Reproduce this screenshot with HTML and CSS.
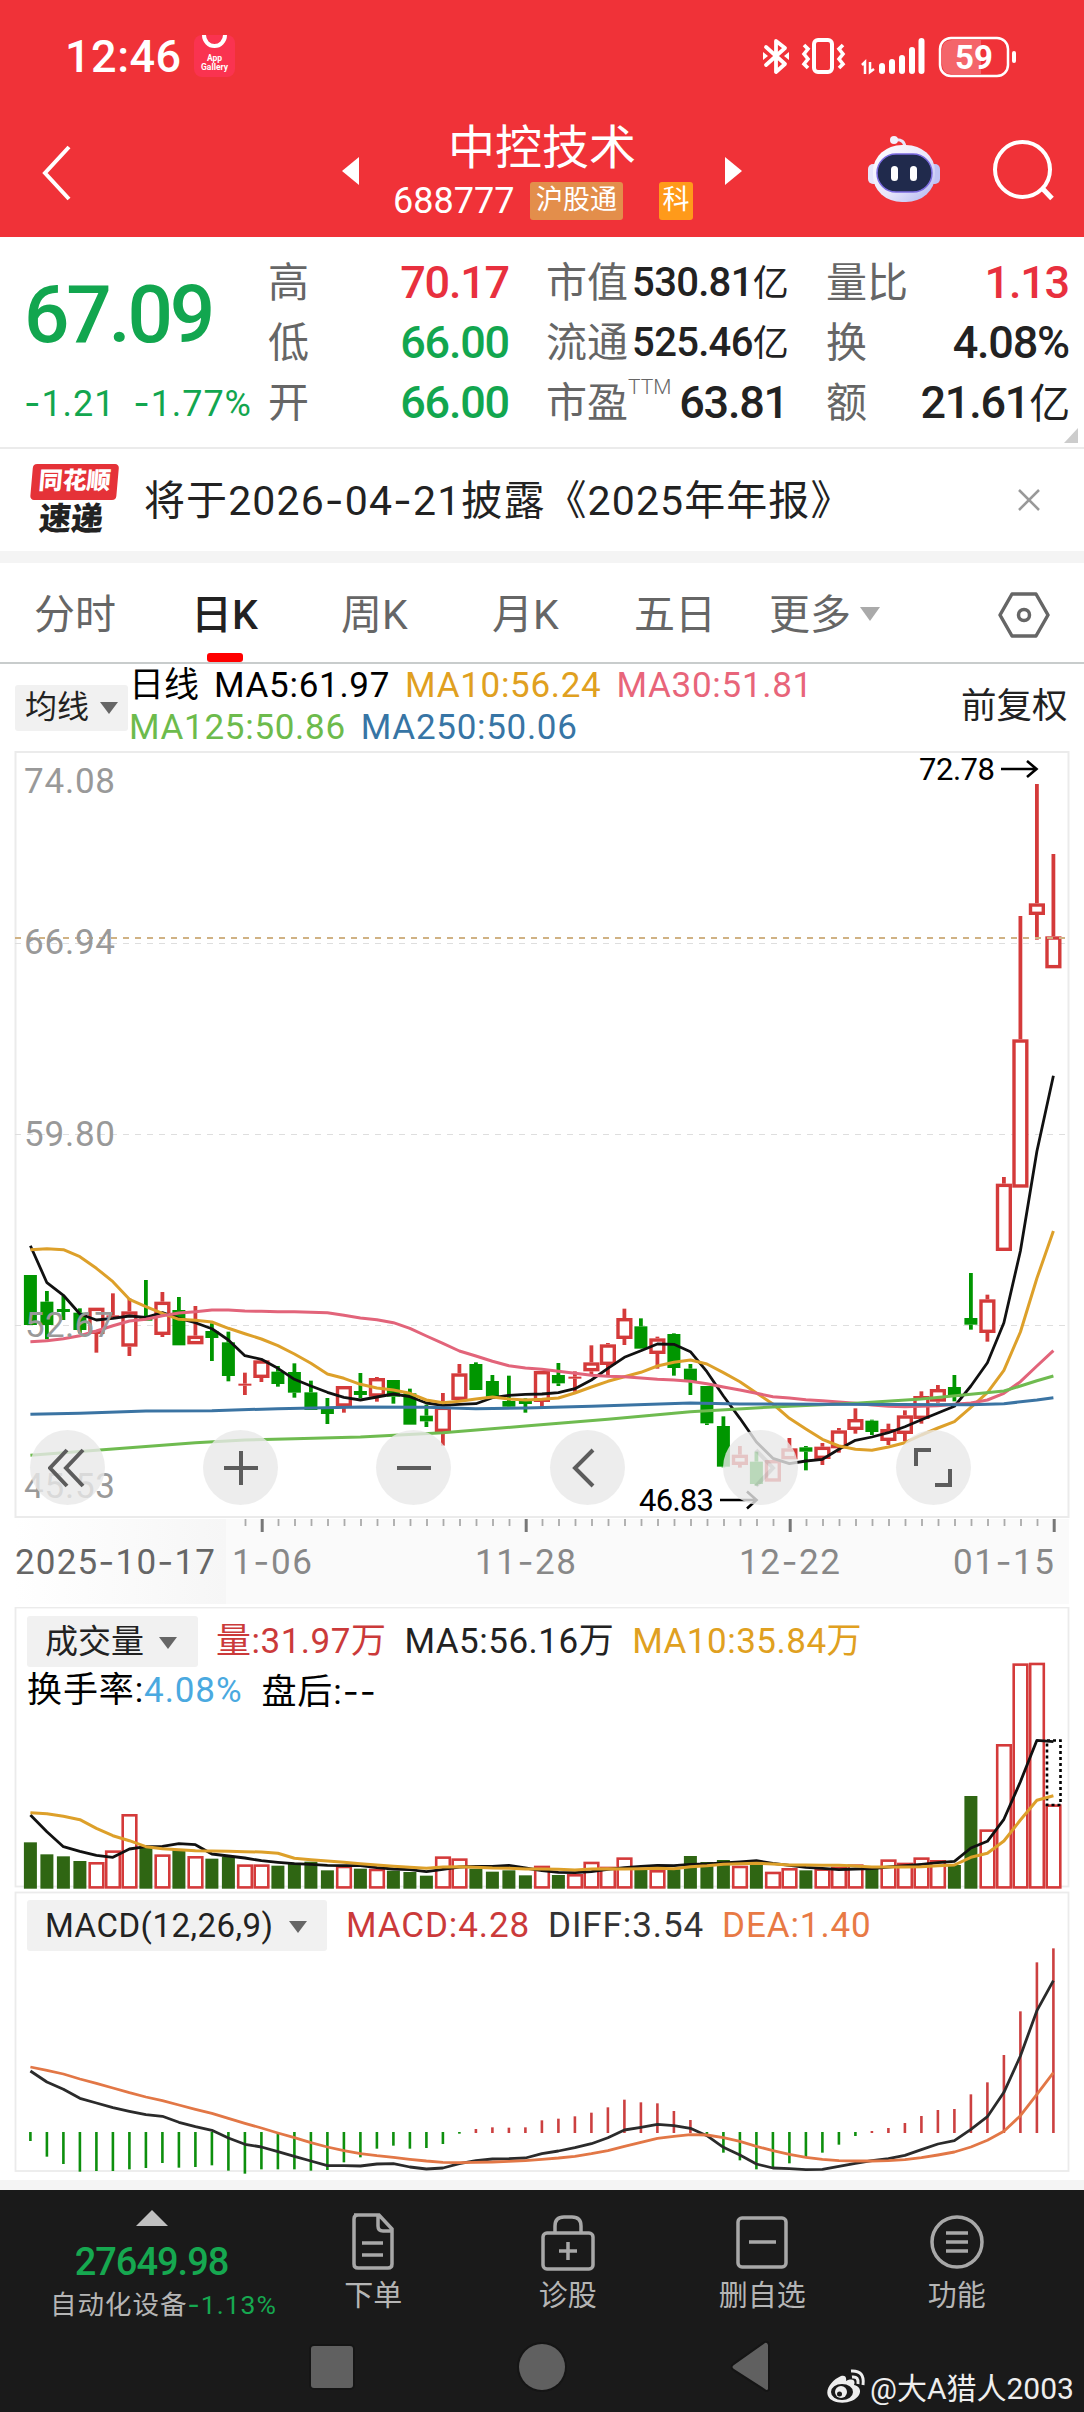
FILE: index.html
```html
<!DOCTYPE html>
<html lang="zh-CN">
<head>
    <meta charset="UTF-8">
    <title>中控技术 688777</title>
    <link rel="stylesheet" href="styles.css">
</head>
<body>
    <header class="top">
        <div class="status-bar">
            <span class="clock">12:46</span>
            <div class="app-gallery">
                <svg width="41" height="18" viewBox="0 0 41 18"><path d="M10 0a10.500 11 0 0 0 21 0" fill="none" stroke="#fff" stroke-width="4"/></svg>
                <span>App</span><span>Gallery</span>
            </div>
            <svg class="status-icons" width="260" height="46" viewBox="760 34 260 46" fill="none" stroke="#fff">
                <path d="M766 47l19 17-9 8V41l9 7-19 17" stroke-width="3.800" stroke-linejoin="round" stroke-linecap="round"/>
                <path d="M763 52l5 4-5 4zM789 52l-5 4 5 4z" fill="#fff" stroke="none"/>
                <rect x="814" y="40" width="18" height="32" rx="4" stroke-width="4"/>
                <path d="M804 45l4 4-4 5 4 5-4 5 4 4M843 45l-4 4 4 5-4 5 4 5-4 4" stroke-width="3.600"/>
                <path d="M862 65l3-3v12M870 62v10l4-3" stroke-width="2.500"/>
                <path d="M882 66v5M892 62v9M902 58v13M912 50v21M921.500 41v30" stroke-width="6" stroke-linecap="round"/>
                <rect x="940" y="38" width="68" height="38" rx="11" stroke-width="2.500"/>
                <path d="M952 40h29v34h-29q-10 0-10-10V50q0-10 10-10z" fill="#fff" fill-opacity=".25" stroke="none"/>
                <path d="M1014 53v8" stroke-width="4" stroke-linecap="round"/>
                <text x="974" y="69" text-anchor="middle" class="battery">59</text>
            </svg>
        </div>
        <div class="title-bar">
            <svg class="back" width="40" height="60" viewBox="0 0 40 60"><path d="M31 5L7 31l24 26" fill="none" stroke="#fff" stroke-width="4"/></svg>
            <i class="arrow-left"></i>
            <div class="stock">
                <h1>中控技术</h1>
                <div class="stock-code"><span>688777</span><b class="tag">沪股通</b><b class="tag tag-ke">科</b></div>
            </div>
            <i class="arrow-right"></i>
            <svg class="robot" width="76" height="70" viewBox="866 134 76 70">
                <defs>
                    <linearGradient id="shell" x1="0" y1="0" x2="1" y2="1">
                        <stop offset="0" stop-color="#fff"/><stop offset=".55" stop-color="#e9e6fb"/><stop offset="1" stop-color="#aeb4f0"/>
                    </linearGradient>
                </defs>
                <path d="M894 140q11-2 11 9" fill="none" stroke="#e8e6fa" stroke-width="3"/>
                <circle cx="894" cy="140" r="4" fill="#f3f1fd"/>
                <rect x="868" y="164" width="12" height="20" rx="5" fill="#e6e5fb"/>
                <rect x="928" y="164" width="12" height="20" rx="5" fill="#bfc3f5"/>
                <rect x="873" y="145" width="62" height="57" rx="29" ry="26" fill="url(#shell)"/>
                <rect x="877" y="154" width="55" height="38" rx="19" fill="#202a4c" stroke="#7b6be0" stroke-width="1.500"/>
                <rect x="891" y="166" width="7" height="15" rx="3.500" fill="#fff"/>
                <rect x="910" y="166" width="7" height="15" rx="3.500" fill="#fff"/>
            </svg>
            <svg width="64" height="64" viewBox="992 138 64 64" fill="none" stroke="#fff" stroke-width="4"><circle cx="1022.500" cy="169.500" r="27.500"/><path d="M1042 188l10 10.500" stroke-width="5"/></svg>
        </div>
    </header>

    <section class="quote">
        <div class="price green">
            <strong>67.09</strong>
            <div><span><i class="dash">-</i>1.21</span><span><i class="dash">-</i>1.77%</span></div>
        </div>
        <dl class="col-a">
            <dt>高</dt><dd class="red">70.17</dd>
            <dt>低</dt><dd class="green">66.00</dd>
            <dt>开</dt><dd class="green">66.00</dd>
        </dl>
        <dl class="col-b">
            <dt>市值</dt><dd class="long">530.81<em>亿</em></dd>
            <dt>流通</dt><dd class="long">525.46<em>亿</em></dd>
            <dt>市盈<sup>TTM</sup></dt><dd>63.81</dd>
        </dl>
        <dl class="col-c">
            <dt>量比</dt><dd class="red">1.13</dd>
            <dt>换</dt><dd>4.08%</dd>
            <dt>额</dt><dd>21.61<em>亿</em></dd>
        </dl>
        <i class="corner"></i>
    </section>

    <section class="news">
        <div class="news-logo"><b>同花顺</b><span>速递</span></div>
        <p>将于2026<i class="dash">-</i>04<i class="dash">-</i>21披露《2025年年报》</p>
        <svg width="24" height="24" viewBox="0 0 24 24"><path d="M2 2l20 20M22 2L2 22" stroke="#999" stroke-width="2.500"/></svg>
    </section>

    <nav class="tabs">
        <a>分时</a>
        <a class="active">日K</a>
        <a>周K</a>
        <a>月K</a>
        <a>五日</a>
        <a>更多<i class="caret light"></i></a>
        <svg width="54" height="48" viewBox="0 0 54 48" fill="none" stroke="#666" stroke-width="3.500"><path d="M15 3h24l12 21-12 21H15L3 24z" stroke-linejoin="round"/><circle cx="27" cy="24" r="5.500"/></svg>
    </nav>

    <section class="ma-bar">
        <div class="picker">均线<i class="caret"></i></div>
        <div class="ma-values">
            <div><span class="black day">日线</span><span class="black">MA5:61.97</span><span class="gold">MA10:56.24</span><span class="pink">MA30:51.81</span></div>
            <div><span class="lime">MA125:50.86</span><span class="blue">MA250:50.06</span></div>
        </div>
        <span class="adjust">前复权</span>
    </section>

    <section class="kline">
        <svg id="kline" width="1084" height="768" viewBox="0 751 1084 768"></svg>
        <div class="chart-tools">
            <button><svg viewBox="-20 -20 40 40"><path d="M-1-18L-18 0-1 18M15-18L-2 0l17 18"/></svg></button>
            <button><svg viewBox="-20 -20 40 40"><path d="M-17 0h34M0-17v34"/></svg></button>
            <button><svg viewBox="-20 -20 40 40"><path d="M-17 0h34"/></svg></button>
            <button><svg viewBox="-20 -20 40 40"><path d="M6-18L-12 0 6 18"/></svg></button>
            <button><svg viewBox="-20 -20 40 40" opacity=".12"><path d="M-4-18L13 0-4 18"/></svg></button>
            <button><svg viewBox="-20 -20 40 40"><path d="M-2-18h-15v16M2 17h15V1"/></svg></button>
        </div>
    </section>

    <svg id="axis" class="axis" width="1084" height="88" viewBox="0 1519 1084 88"></svg>

    <section class="panel volume">
        <svg id="volume" width="1084" height="284" viewBox="0 1607 1084 284"></svg>
        <div class="panel-head">
            <div class="picker">成交量<i class="caret"></i></div>
            <span class="crimson">量:31.97万</span><span>MA5:56.16万</span><span class="gold">MA10:35.84万</span>
        </div>
        <div class="turnover"><span>换手率:<b>4.08%</b></span><span>盘后:<i class="dash">--</i></span></div>
    </section>

    <section class="panel macd">
        <svg id="macd" width="1084" height="290" viewBox="0 1891 1084 290"></svg>
        <div class="panel-head">
            <div class="picker">MACD(12,26,9)<i class="caret"></i></div>
            <span class="crimson">MACD:4.28</span><span class="dark">DIFF:3.54</span><span class="orange">DEA:1.40</span>
        </div>
    </section>

    <footer class="bottom">
        <div class="actions">
            <div class="index">
                <i class="up"></i>
                <strong>27649.98</strong>
                <span>自动化设备<b><i class="dash">-</i>1.13%</b></span>
            </div>
            <a><svg viewBox="0 0 60 60"><path d="M11 3h25l13 14v35q0 4-4 4H15q-4 0-4-4V7q0-4 4-4M35 3v11q0 5 5 5h9M19 31h21M19 43h21"/></svg>下单</a>
            <a><svg viewBox="0 0 60 60"><rect x="5" y="21" width="50" height="36" rx="4"/><path d="M17 21v-7q0-9 9-9h8q9 0 9 9v7M21 39h18M30 30v18"/></svg>诊股</a>
            <a><svg viewBox="0 0 60 60"><rect x="6" y="6" width="48" height="49" rx="4"/><path d="M17 30h27"/></svg>删自选</a>
            <a><svg viewBox="0 0 60 60"><circle cx="30" cy="30" r="25"/><path d="M19 21h22M19 30h22M19 39h22"/></svg>功能</a>
        </div>
        <div class="system-nav">
            <svg width="560" height="60" viewBox="260 2338 560 60" fill="#606060" stroke="#151515" stroke-width="4" paint-order="stroke">
                <rect x="311" y="2346" width="42" height="42" rx="3"/>
                <circle cx="542" cy="2367" r="23"/>
                <path d="M768 2345v44q-1 2-3 0l-31-20q-3-2 0-4l31-22q2-1 3 2z"/>
            </svg>
            <div class="watermark">
                <svg width="40" height="36" viewBox="0 0 40 36">
                    <path d="M15 8C6 12-1 21 2 28c4 9 25 9 31-1 3-6-1-9-5-10 2-5-2-7-8-4 1-5-2-6-5-5z" fill="#eee"/>
                    <ellipse cx="16" cy="24" rx="11" ry="8" fill="#1a1a1a"/>
                    <circle cx="15" cy="24" r="6" fill="#eee"/><circle cx="13.500" cy="26" r="2.500" fill="#1a1a1a"/>
                    <path d="M26 9q7-1 6 7M25 3q14-1 12 14" fill="none" stroke="#eee" stroke-width="3"/>
                </svg>
                <span>@大A猎人2003</span>
            </div>
        </div>
    </footer>

    <script src="script.js"></script>
</body>
</html>
```
FILE: styles.css
```css
* {
    box-sizing: border-box;
}

body {
    margin: 0;
    width: 1084px;
    height: 2412px;
    background: #fff;
    color: #222;
    font-family: Roboto, "Noto Sans CJK SC", sans-serif;
    overflow: hidden;
}

i,
em {
    font-style: normal;
}

b {
    font-weight: inherit;
}

.dash {
    font-family: Inter, sans-serif;
}

.red { color: #e8303e; }
.green { color: #12a64f; }
.black { color: #000; }
.gold { color: #e0a020; }
.pink { color: #e8657a; }
.lime { color: #6dbb4c; }
.blue { color: #3775a5; }
.crimson { color: #cb3a3a; }
.dark { color: #333; }
.orange { color: #e87a45; }

/* header */
.top {
    height: 237px;
    background: #f03238;
    color: #fff;
}

.status-bar {
    display: flex;
    height: 114px;
    padding: 34px 64px 0 65px;
}

.clock {
    width: 129px;
    font-size: 45px;
    font-weight: 500;
    line-height: 46px;
    letter-spacing: 0.5px;
}

.app-gallery {
    display: flex;
    flex-direction: column;
    align-items: center;
    width: 41px;
    height: 42px;
    margin-top: 1px;
    border-radius: 8px;
    background: #fa3350;
    font-size: 8.500px;
    font-weight: 700;
    line-height: 9px;
    overflow: hidden;
}

.app-gallery svg {
    margin-bottom: 1px;
}

.status-icons {
    margin-left: auto;
}

.battery {
    font-size: 33px;
    font-weight: 700;
    fill: #fff;
    stroke: none;
}

.title-bar {
    display: flex;
    align-items: flex-start;
    height: 123px;
}

.back {
    margin: 28px 0 0 38px;
}

.arrow-left,
.arrow-right {
    margin-top: 43px;
    border: 14px solid transparent;
}

.arrow-left {
    margin-left: 264px;
    border-left: 0;
    border-right: 17px solid #fff;
}

.arrow-right {
    border-right: 0;
    border-left: 17px solid #fff;
}

.stock {
    width: 366px;
    padding-left: 34px;
}

.stock h1 {
    margin: 0;
    height: 68px;
    padding-left: 55px;
    font-size: 47px;
    font-weight: 400;
    line-height: 67px;
}

.stock-code {
    display: flex;
    align-items: center;
    height: 38px;
    font-size: 36px;
}

.stock-code span {
    width: 137px;
}

.tag {
    width: 93px;
    height: 38px;
    margin-right: 36px;
    border-radius: 3px;
    background: #e38e4b;
    font-size: 27px;
    line-height: 36px;
    text-align: center;
}

.tag-ke {
    width: 34px;
    margin-right: 0;
    background: #ff9a1a;
}

.robot {
    margin: 20px 50px 0 124px;
}

.robot + svg {
    margin-top: 24px;
}

/* quote block */
.quote {
    position: relative;
    display: flex;
    height: 212px;
    border-bottom: 2px solid #ebebeb;
}

.price {
    width: 268px;
    padding: 39px 0 0 24px;
}

.price strong {
    display: block;
    height: 78px;
    font-size: 80px;
    font-weight: 500;
    line-height: 78px;
    letter-spacing: -3.200px;
}

.price div {
    display: flex;
    gap: 18px;
    margin-top: 30px;
    font-size: 36px;
    line-height: 38px;
    letter-spacing: 0.900px;
    white-space: nowrap;
}

.quote dl {
    display: grid;
    grid-template-columns: 80px 1fr;
    grid-auto-rows: 60px;
    margin: 16px 0 0;
    line-height: 60px;
}

.quote dt {
    color: #666;
    font-size: 41px;
    white-space: nowrap;
}

.quote dd {
    margin: 0;
    font-size: 45px;
    font-weight: 500;
    text-align: right;
    letter-spacing: -1.200px;
    white-space: nowrap;
}

.quote em {
    font-size: 41px;
    font-weight: 400;
}

.quote .long {
    font-size: 40px;
    letter-spacing: -0.700px;
}

.quote .long em {
    font-size: 36px;
}

.quote .col-a {
    width: 241px;
}

.quote .col-b {
    width: 242px;
    margin-left: 37px;
}

.quote .col-c {
    width: 243px;
    margin-left: 38px;
}

.quote sup {
    font-size: 21px;
    line-height: 0;
    vertical-align: 23px;
    font-weight: 300;
}

.corner {
    position: absolute;
    right: 6px;
    bottom: 4px;
    border-left: 14px solid transparent;
    border-bottom: 15px solid #ccc;
}

/* news strip */
.news {
    display: flex;
    align-items: center;
    height: 114px;
    padding: 0 43px 0 30px;
    border-bottom: 12px solid #f4f4f4;
}

.news-logo {
    width: 86px;
    margin-right: 28px;
    text-align: center;
    font-weight: 900;
    transform: skewX(-5deg);
}

.news-logo b {
    display: block;
    height: 36px;
    border-radius: 4px;
    background: #e53238;
    color: #fff;
    font-size: 24px;
    line-height: 34px;
}

.news-logo span {
    display: block;
    height: 36px;
    font-size: 32px;
    line-height: 38px;
}

.news p {
    flex: 1;
    margin: -7px 0 0;
    font-size: 41px;
    letter-spacing: 1.100px;
}

/* period tabs */
.tabs {
    display: flex;
    align-items: center;
    height: 101px;
    padding: 2px 32px 0 34px;
    border-bottom: 2px solid #c8cccc;
    color: #666;
    font-size: 41px;
}

.tabs a {
    display: flex;
    align-items: center;
    height: 97px;
    padding-bottom: 5px;
}

.tabs a:nth-child(1) { width: 157px; }
.tabs a:nth-child(2) { width: 150px; }
.tabs a:nth-child(3) { width: 151px; }
.tabs a:nth-child(4) { width: 142px; }
.tabs a:nth-child(5) { width: 135px; }

.tabs .active {
    position: relative;
    color: #222;
    font-weight: 500;
}

.tabs .active::after {
    content: "";
    position: absolute;
    left: 16px;
    bottom: 0;
    width: 36px;
    height: 9px;
    border-radius: 3px;
    background: #f00;
}

.tabs svg {
    margin: 3px 1px 0 auto;
}

.caret {
    display: inline-block;
    margin-left: 11px;
    border: 9px solid transparent;
    border-top: 12px solid #666;
    border-bottom: 0;
    vertical-align: 4px;
}

.caret.light {
    margin: 6px 0 0 9px;
    border-top-color: #aaa;
    border-width: 14px 10px 0;
}

/* moving averages */
.ma-bar {
    display: flex;
    height: 87px;
    padding-left: 15px;
}

.picker {
    border-radius: 3px;
    background: #f1f1f1;
    letter-spacing: 0;
    white-space: nowrap;
}

.ma-bar .picker {
    width: 113px;
    height: 46px;
    margin-top: 21px;
    padding-left: 10px;
    font-size: 32px;
    line-height: 45px;
}

.ma-values {
    flex: 1;
    padding: 1px 0 0 1px;
    font-size: 35px;
    line-height: 42px;
    letter-spacing: 0.700px;
}

.ma-values div {
    display: flex;
    gap: 15px;
}

.ma-values .day {
    width: 70px;
    letter-spacing: 0;
    white-space: nowrap;
}

.adjust {
    width: 123px;
    font-size: 35.500px;
    line-height: 84px;
}

/* charts */
.kline {
    position: relative;
    height: 768px;
}

.kline > svg,
.axis {
    display: block;
}

.chart-tools {
    position: absolute;
    left: 30px;
    bottom: 14px;
    display: flex;
    gap: 98.200px;
}

.chart-tools button {
    width: 75px;
    height: 75px;
    padding: 0;
    border: 0;
    border-radius: 50%;
    background: rgba(233, 233, 233, 0.8);
}

.chart-tools svg {
    display: block;
    width: 40px;
    height: 40px;
    margin: 0 auto;
    fill: none;
    stroke: #5c5c5c;
    stroke-width: 4;
}

.price-label {
    font-size: 35px;
    fill: #999;
}

.mark {
    font-size: 31px;
    fill: #000;
}

.axis text {
    font-size: 35px;
    fill: #888;
}

.axis .first {
    fill: #666;
}

.panel {
    position: relative;
}

.panel > svg {
    position: absolute;
    top: 0;
    left: 0;
}

.volume {
    height: 284px;
}

.macd {
    height: 299px;
    border-bottom: 10px solid #f4f4f4;
}

.panel-head {
    position: relative;
    display: flex;
    gap: 18px;
    padding: 9px 0 0 27px;
    font-size: 35px;
    line-height: 52px;
    letter-spacing: 0.900px;
}

.volume .panel-head {
    letter-spacing: 0.500px;
}

.panel-head .picker {
    height: 51px;
    padding-left: 18px;
    font-size: 33px;
}

.volume .picker {
    width: 171px;
    letter-spacing: 0;
}

.macd .picker {
    width: 300px;
    margin-right: 1px;
    letter-spacing: 0.500px;
}

.panel-head .caret {
    margin-left: 15px;
}

.turnover {
    position: relative;
    display: flex;
    gap: 19px;
    padding: 1px 0 0 27px;
    color: #000;
    font-size: 35px;
    line-height: 44px;
    letter-spacing: 0.900px;
}

.turnover b {
    color: #4aa9e0;
}

/* bottom bar */
.bottom {
    height: 222px;
    background: #1a1a1a;
    color: #b5b5b5;
}

.actions {
    display: flex;
    height: 140px;
    font-size: 29px;
}

.index {
    display: flex;
    flex-direction: column;
    align-items: center;
    width: 276px;
    padding: 20px 0 0 27px;
}

.index .up {
    border: 16px solid transparent;
    border-top: 0;
    border-bottom-color: #c0c0c0;
}

.index strong {
    margin: 16px 0 5px;
    color: #16a850;
    font-size: 38px;
    font-weight: 500;
    line-height: 40px;
    letter-spacing: -1px;
}

.index span {
    margin-left: 24px;
    font-size: 26.500px;
    line-height: 34px;
    letter-spacing: 1px;
    white-space: nowrap;
}

.index b {
    color: #16a850;
}

.actions a {
    display: flex;
    flex-direction: column;
    align-items: center;
    width: 194.500px;
    padding-top: 22px;
    line-height: 48px;
}

.actions a svg {
    width: 60px;
    height: 60px;
    fill: none;
    stroke: #a8a8a8;
    stroke-width: 3.500;
}

.system-nav {
    display: flex;
    padding: 8px 0 0 260px;
}

.watermark {
    display: flex;
    align-items: center;
    height: 60px;
    margin: 18px 0 0 6px;
    color: #eee;
    font-size: 30px;
    white-space: nowrap;
}

.watermark span {
    margin: 0 0 0 4px;
}
```
FILE: script.js
```js
const RED = '#d43a3a';
const GREEN = '#009600';
const STEP = 16.5;
const x = i => 30.4 + STEP * i;

function add(svg, tag, attrs, text) {
    const el = document.createElementNS('http://www.w3.org/2000/svg', tag);
    for (const k in attrs) el.setAttribute(k, attrs[k]);
    if (text) el.textContent = text;
    svg.appendChild(el);
    return el;
}

function line(svg, x1, y1, x2, y2, stroke, width, dash) {
    add(svg, 'line', { x1, y1, x2, y2, stroke, 'stroke-width': width, 'stroke-dasharray': dash || 'none' });
}

function label(svg, lx, ly, width, text, cls) {
    const t = add(svg, 'text', { x: lx, y: ly, class: cls || '', textLength: width });
    // wide hyphens come from Inter
    text.split(/(-)/).forEach(part => {
        if (part) add(t, 'tspan', part === '-' ? { class: 'dash' } : {}, part);
    });
}

// values are thirds of a pixel below base; pairs are [index, value]
function curve(svg, base, values, color, width) {
    const pts = values.map((v, i) => Array.isArray(v) ? [x(v[0]), base + v[1] / 3] : [x(i), base + v / 3]);
    add(svg, 'polyline', {
        points: pts.map(p => p[0].toFixed(1) + ',' + p[1].toFixed(1)).join(' '),
        fill: 'none', stroke: color, 'stroke-width': width, 'stroke-linejoin': 'round'
    });
}

// type, high, body top, body bottom, low
const candles = [
    ['g',135,135,285,285],['g',183,215,285,328],['g',198,237,246,270],['g',235,248,300,310],['r',233,233,312,368],
    ['r',190,256,262,262],['r',205,244,350,378],['g',150,262,272,272],['r',186,215,315,321],['g',201,240,346,346],
    ['r',228,317,343,343],['g',280,303,324,393],['g',305,337,438,454],['r',428,461,467,495],['r',391,391,444,456],
    ['g',408,425,462,470],['g',400,426,488,503],['g',452,487,540,540],['g',504,535,552,582],['r',468,468,530,548],
    ['g',429,483,495,505],['r',441,444,500,515],['g',450,450,500,521],['g',476,490,584,584],['g',524,557,574,591],
    ['r',489,530,606,647],['r',402,430,510,510],['g',397,402,480,480],['g',435,453,503,503],['g',437,513,530,537],
    ['g',505,513,522,548],['r',423,423,516,535],['g',399,435,460,468],['r',424,440,446,485],['r',346,397,424,433],
    ['r',339,343,405,437],['r',236,264,327,345],['g',265,289,356,356],['r',320,325,372,416],['g',310,312,414,437],
    ['g',402,416,456,495],['g',468,468,580,585],['g',559,588,710,712],['r',648,674,705,713],['g',665,695,762,767],
    ['r',690,690,755,755],['r',624,655,688,688],['g',648,652,665,721],['r',639,650,687,705],['r',594,601,655,668],
    ['r',535,567,600,611],['g',569,572,606,615],['r',581,597,633,645],['r',541,556,612,634],['r',484,498,567,581],
    ['r',465,477,515,518],['g',435,471,500,514],['g',129,264,284,299],['r',194,208,309,335],['r',-159,-139,63,63],
    ['r',-942,-572,-127,-127],['r',-1338,-980,-945,-871],['r',-1128,-881,-785,-785]
];

function drawKline() {
    const svg = document.getElementById('kline');
    add(svg, 'rect', { x: 15.5, y: 752, width: 1053, height: 765, fill: 'none', stroke: '#ebebeb', 'stroke-width': 2 });
    [943.5, 1134.5, 1325.5].forEach(y => line(svg, 15, y, 1066, y, '#dedede', 1.2, '6 6'));

    candles.forEach(([type, high, top, bottom, low], i) => {
        const cx = x(i);
        const [h, t, b, l] = [high, top, bottom, low].map(v => 1230 + v / 3);
        const color = type === 'g' ? GREEN : RED;
        if (h < t) line(svg, cx, h, cx, t, color, 3.8);
        if (l > b) line(svg, cx, b, cx, l, color, 3.8);
        if (type === 'g' || b - t < 4) {
            add(svg, 'rect', { x: cx - 6.5, y: t, width: 13, height: b - t, fill: color });
        } else {
            add(svg, 'rect', { x: cx - 6.4, y: t + 1.7, width: 12.8, height: b - t - 3.4, fill: '#fff', stroke: color, 'stroke-width': 3.4 });
        }
    });

    line(svg, 15, 938, 1066, 938, '#d0b284', 2, '6 6');

    curve(svg, 1230, [47,158,196,252,270,265,258,262,248,265,278,296,330,377,388,415,448,468,487,502,510,501,492,500,519,526,523,521,503,496,493,492,488,476,450,415,382,362,342,343,365,425,498,565,636,685,701,693,688,658,631,621,608,590,569,549,529,468,398,278,63,-236,-463], '#111', 2.8);
    curve(svg, 1230, [59,56,59,80,115,155,208,230,250,268,271,276,295,311,327,347,372,400,432,445,463,474,480,490,510,518,514,507,501,507,510,508,504,489,471,454,440,427,408,397,390,402,428,455,489,522,565,597,628,648,658,661,651,638,615,594,575,532,488,421,306,145,3], '#dda02a', 3);
    curve(svg, 1230, [335,332,326,317,303,287,273,268,257,249,245,240,240,243,244,245,245,247,248,256,264,269,278,295,318,340,363,378,394,407,414,418,424,430,436,439,440,444,448,450,454,461,471,480,490,500,504,509,512,516,520,525,529,530,529,527,523,519,510,490,455,408,362], '#e2647a', 3);
    curve(svg, 1230, [[0,676],[5,657],[10,638],[13,630],[16,626],[20,621],[25,608],[30,588],[35,568],[40,545],[45,531],[50,520],[54,507],[57,493],[59,483],[60,468],[61,452],[62,438]], '#6fbb50', 3);
    curve(svg, 1230, [[0,553],[3,550],[7,543],[11,542],[15,536],[20,531],[24,532],[27,536],[30,534],[34,529],[40,519],[43,522],[48,523],[57,524],[59,521],[61,510],[62,503]], '#3b74a3', 3);

    label(svg, 24, 793, 91, '74.08', 'price-label');
    label(svg, 24, 954, 91, '66.94', 'price-label');
    label(svg, 24, 1146, 91, '59.80', 'price-label');
    label(svg, 25, 1337, 89, '52.67', 'price-label');
    label(svg, 24, 1498, 91, '45.53', 'price-label');

    label(svg, 919, 779.5, 76, '72.78', 'mark');
    add(svg, 'path', { d: 'M1001 769h35M1027 761l9.500 8-9.500 8', fill: 'none', stroke: '#000', 'stroke-width': 2.6 });
    label(svg, 639, 1510.5, 75, '46.83', 'mark');
    add(svg, 'path', { d: 'M720 1500h36M747 1491.500l9.500 8.500-9.500 8.500', fill: 'none', stroke: '#000', 'stroke-width': 2.6 });
}

function drawAxis() {
    const svg = document.getElementById('axis');
    const fade = add(add(svg, 'defs', {}), 'linearGradient', { id: 'fade' });
    add(fade, 'stop', { offset: 0, 'stop-color': '#fff' });
    add(fade, 'stop', { offset: 1, 'stop-color': '#f6f6f6' });
    add(svg, 'rect', { x: 15, y: 1519, width: 1054, height: 85, fill: '#fafafa' });
    add(svg, 'rect', { x: 15, y: 1519, width: 211, height: 85, fill: 'url(#fade)' });
    for (let i = 13; i <= 62; i++) {
        if ((i - 14) % 16 === 0) line(svg, x(i) + 0.8, 1519, x(i) + 0.8, 1532, '#777', 3);
        else line(svg, x(i) + 0.6, 1519, x(i) + 0.6, 1526, '#aaa', 1.8);
    }
    label(svg, 15, 1573.500, 200, '2025-10-17', 'first');
    label(svg, 232, 1573.500, 80, '1-06');
    label(svg, 475, 1573.500, 101, '11-28');
    label(svg, 739, 1573.500, 101, '12-22');
    label(svg, 953, 1573.500, 101, '01-15');
}

const volumeTops = [727,763,769,783,786,751,642,744,763,749,768,776,770,793,793,797,792,785,811,797,806,806,812,816,827,769,775,806,815,811,826,797,825,822,785,800,772,808,810,808,768,786,780,797,794,815,804,811,805,800,793,806,778,788,772,780,795,588,688,432,190,188,613];

function drawVolume() {
    const svg = document.getElementById('volume');
    add(svg, 'rect', { x: 15.5, y: 1607.5, width: 1053, height: 279, fill: 'none', stroke: '#ebebeb', 'stroke-width': 1.8 });
    volumeTops.forEach((v, i) => {
        const y = 1600 + v / 3;
        if (candles[i][0] === 'g') {
            add(svg, 'rect', { x: x(i) - 6.5, y, width: 13, height: 1888.7 - y, fill: '#2f6613' });
        } else {
            add(svg, 'rect', { x: x(i) - 6.7, y: y + 1.3, width: 13.6, height: 1887.4 - y - 1.3, fill: '#fff', stroke: RED, 'stroke-width': 2.6 });
        }
    });
    // projected volume for the running session
    add(svg, 'rect', { x: 1047, y: 1740.5, width: 13.5, height: 64.5, fill: 'none', stroke: '#000', 'stroke-width': 2.6, 'stroke-dasharray': '3 3' });
    curve(svg, 1600, [645,695,740,754,766,772,747,740,739,731,734,762,768,774,782,787,791,793,796,797,797,803,807,809,815,808,801,799,799,796,804,812,817,818,815,808,803,799,796,797,793,792,789,786,782,790,796,802,805,809,807,806,801,797,793,788,784,744,724,658,545,421,425], '#111', 2.8);
    curve(svg, 1600, [638,641,649,659,685,707,722,740,746,749,752,753,754,755,756,760,775,779,783,787,791,795,799,802,805,801,800,802,804,805,807,807,808,810,807,806,807,806,805,806,800,797,793,791,790,792,795,795,796,796,798,801,801,801,800,797,795,772,760,723,660,601,587], '#dda02a', 3);
}

function drawMacd() {
    const svg = document.getElementById('macd');
    const bars = [753,800,822,845,843,843,838,834,819,833,831,826,842,851,838,838,838,842,840,817,802,776,767,776,774,762,731,717,712,713,712,691,686,679,668,652,629,637,640,663,690,732,788,811,838,832,820,803,788,764,738,723,714,699,678,660,657,613,577,495,364,217,175];
    add(svg, 'rect', { x: 15.5, y: 1892.5, width: 1053, height: 278.5, fill: 'none', stroke: '#ebebeb', 'stroke-width': 1.8 });
    bars.forEach((v, i) => {
        const up = v < 727;
        line(svg, x(i), up ? 2133 : 2132, x(i), 1890 + v / 3, up ? '#cc4040' : '#0d8f0d', 2.6);
    });
    curve(svg, 1890, [543,576,598,625,639,653,664,674,679,697,710,721,744,763,771,785,799,813,827,827,828,822,821,831,837,834,821,812,807,806,804,791,783,773,761,743,720,712,703,707,715,737,772,795,822,834,836,839,838,829,820,812,806,796,779,762,752,718,680,607,498,362,272], '#2b2b2b', 2.8);
    curve(svg, 1890, [531,541,552,567,580,594,608,621,632,645,658,670,685,700,714,729,743,758,771,782,791,797,802,808,813,817,818,817,816,814,812,808,804,799,791,782,769,757,745,739,734,735,743,754,769,782,793,802,808,812,813,813,812,809,803,795,786,771,751,724,677,613,548], '#e27746', 2.8);
}

drawKline();
drawAxis();
drawVolume();
drawMacd();
```
